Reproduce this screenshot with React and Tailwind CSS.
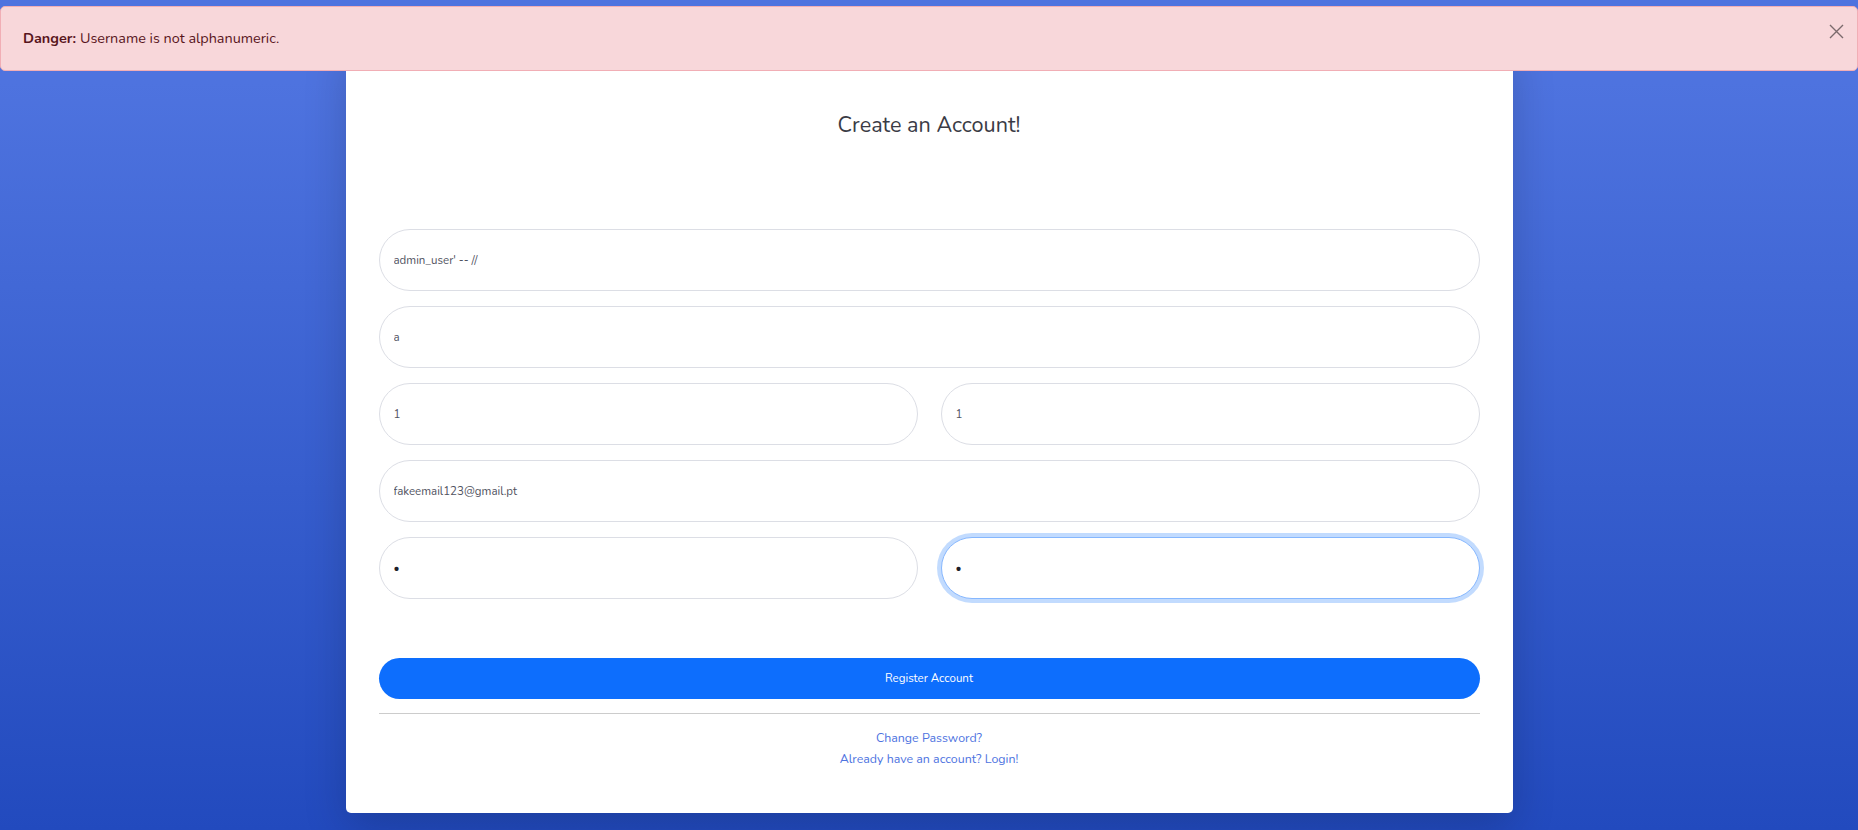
function Field({ value, type = 'text', focused = false }) {
  return (
    <input
      type={type}
      defaultValue={value}
      className={`h-[62px] w-full rounded-full border bg-white px-[14px] text-[11.5px] outline-none ${
        type === 'password' ? 'text-[#1e2029]' : 'text-[#505260]'
      } ${
        focused
          ? 'border-[#86b7fe] shadow-[0_0_0_4px_rgba(13,110,253,0.25)]'
          : 'border-[#dcdee5]'
      }`}
    />
  );
}

export default function App() {
  return (
    <div className="relative h-[830px] overflow-hidden bg-linear-to-b from-[#4e73df] from-10% to-[#224abe] font-['Nunito','Open_Sans',sans-serif]">
      <div className="mx-auto mt-[43px] w-[1167px] rounded-[5px] bg-white px-[33px] pt-[69px] pb-[45px] shadow-[0_14px_43px_rgba(0,0,0,0.175)]">
        <h1 className="text-center text-[21.6px] leading-[26px] font-normal text-[#3a3b45]">
          Create an Account!
        </h1>

        <form className="mt-[91px] flex flex-col gap-[15px]">
          <Field value="admin_user' -- //" />
          <Field value="a" />
          <div className="grid grid-cols-2 gap-x-[23px]">
            <Field value="1" />
            <Field value="1" />
          </div>
          <Field value="fakeemail123@gmail.pt" type="email" />
          <div className="grid grid-cols-2 gap-x-[23px]">
            <Field value="a" type="password" />
            <Field value="a" type="password" focused />
          </div>
        </form>

        <button
          type="button"
          className="mt-[59px] h-[41px] w-full rounded-full bg-[#0d6efd] text-[11.5px] text-white"
        >
          Register Account
        </button>

        <hr className="mt-[14px] border-t border-[#cccccc]" />

        <div className="mt-[15px] flex flex-col items-center gap-[3px] text-[12.4px] leading-[18px] text-[#4e73df]">
          <a href="#">Change Password?</a>
          <a href="#">Already have an account? Login!</a>
        </div>
      </div>

      {/* dismissible alert sits over the top of the card */}
      <div className="absolute top-[6px] right-0 left-0 flex h-[65px] items-center rounded-[5px] border border-[#f1aeb5] bg-[#f8d7da] pl-[22px] text-[14.4px] text-[#58151c]">
        <span>
          <strong className="font-bold">Danger:</strong> Username is not alphanumeric.
        </span>
        <button type="button" className="absolute top-[17px] right-[13px] opacity-50">
          <svg width="15" height="15" viewBox="0 0 15 15" fill="none" stroke="#000" strokeWidth="1.4">
            <path d="M1 1 14 14M14 1 1 14" />
          </svg>
        </button>
      </div>
    </div>
  );
}
